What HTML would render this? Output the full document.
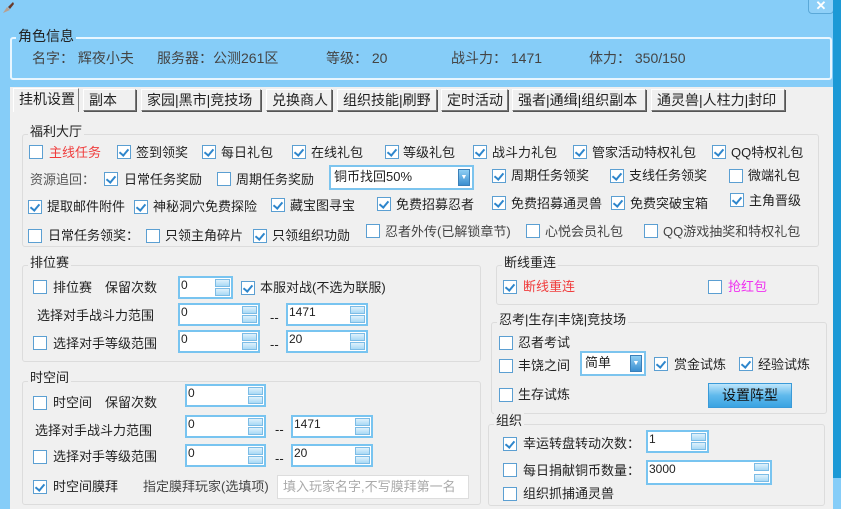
<!DOCTYPE html>
<html><head><meta charset="utf-8"><style>
*{margin:0;padding:0;box-sizing:border-box}
body{width:841px;height:509px;overflow:hidden;background:#86cdf8;position:relative;font-family:"Liberation Sans","Noto Sans CJK SC",sans-serif;font-size:13px;color:#222}
.a{position:absolute;white-space:nowrap}
.t{position:absolute;white-space:nowrap;line-height:16px}
.cb{position:absolute;width:14px;height:14px;border:1px solid #5b9fd2;background:#fff}
.cb.c::after{content:"";position:absolute;left:3px;top:1px;width:4px;height:7px;border:solid #2e86cc;border-width:0 2px 2px 0;transform:rotate(40deg)}
.g{position:absolute;border:1px solid #dcdcdc;border-radius:3px}
.gt{position:absolute;background:#f0f0f0;padding:0 2px;line-height:16px;font-size:13px;color:#222}
.sp{position:absolute;background:#fff;border:2px solid #78c4f0;font-size:12px;line-height:14px;padding-left:1px}
.sp i{position:absolute;right:1px;width:15px;height:8px;background:linear-gradient(#dff1fc,#a9d9f5);border:1px solid #7cbce6}
.sp i.u{top:1px}.sp i.d{bottom:1px}
.tab{position:absolute;top:89px;height:22px;background:#f0f0f0;border:1px solid #777;border-top-color:#fff;border-left-color:#fff;box-shadow:1px 1px 0 #555;font-size:14px;line-height:20px;padding-left:5px}
.inf{position:absolute;white-space:nowrap;line-height:16px;color:#444;font-size:14px;top:50px}
</style></head><body>
<svg class="a" style="left:1px;top:1px" width="14" height="14"><path d="M2 12 L6 6 L9 9 Z" fill="#b8a090"/><path d="M7 6 L12 1 L13 3 L9 8Z" fill="#6a3a2a"/></svg>
<div class="a" style="left:808px;top:-2px;width:26px;height:16px;border:1px solid #5aa8d8;border-radius:0 0 4px 4px;background:#8fd0f8;color:#fff;font-weight:bold;font-size:13px;text-align:center;line-height:14px">✕</div>
<div class="a" style="left:833px;top:0;width:8px;height:478px;background:#1c99d6"></div>
<div class="a" style="left:10px;top:37px;width:822px;height:43px;border:2px solid #e8f6ff;border-radius:3px"></div>
<div class="a" style="left:16px;top:28px;background:#86cdf8;padding:0 2px;font-size:14px;line-height:16px">角色信息</div>
<div class="inf" style="left:32px">名字： 辉夜小夫</div>
<div class="inf" style="left:157px">服务器：公测261区</div>
<div class="inf" style="left:326px">等级： 20</div>
<div class="inf" style="left:451px">战斗力： 1471</div>
<div class="inf" style="left:589px">体力： 350/150</div>

<div class="a" style="left:10px;top:87px;width:823px;height:422px;background:#f0f0f0"></div>
<div class="tab" style="left:13px;width:66px;top:88px;height:24px;box-shadow:none;border-bottom:none">挂机设置</div>
<div class="tab" style="left:83px;width:53px">副本</div>
<div class="tab" style="left:141px;width:120px">家园|黑市|竞技场</div>
<div class="tab" style="left:266px;width:66px">兑换商人</div>
<div class="tab" style="left:337px;width:100px">组织技能|刷野</div>
<div class="tab" style="left:441px;width:67px">定时活动</div>
<div class="tab" style="left:512px;width:134px">强者|通缉|组织副本</div>
<div class="tab" style="left:651px;width:134px">通灵兽|人柱力|封印</div>

<!-- 福利大厅 -->
<div class="g" style="left:22px;top:134px;width:797px;height:113px"></div>
<div class="gt" style="left:28px;top:124px">福利大厅</div>
<div class="cb" style="left:29px;top:145px"></div><div class="t" style="left:49px;top:145px;color:#f03c3c">主线任务</div>
<div class="cb c" style="left:117px;top:145px"></div><div class="t" style="left:136px;top:145px">签到领奖</div>
<div class="cb c" style="left:202px;top:145px"></div><div class="t" style="left:221px;top:145px">每日礼包</div>
<div class="cb c" style="left:292px;top:145px"></div><div class="t" style="left:311px;top:145px">在线礼包</div>
<div class="cb c" style="left:385px;top:145px"></div><div class="t" style="left:403px;top:145px">等级礼包</div>
<div class="cb c" style="left:473px;top:145px"></div><div class="t" style="left:492px;top:145px">战斗力礼包</div>
<div class="cb c" style="left:573px;top:145px"></div><div class="t" style="left:592px;top:145px">管家活动特权礼包</div>
<div class="cb c" style="left:712px;top:145px"></div><div class="t" style="left:731px;top:145px">QQ特权礼包</div>

<div class="t" style="left:30px;top:172px;color:#555">资源追回：</div>
<div class="cb c" style="left:104px;top:172px"></div><div class="t" style="left:124px;top:172px">日常任务奖励</div>
<div class="cb" style="left:217px;top:172px"></div><div class="t" style="left:236px;top:172px">周期任务奖励</div>
<div class="a" style="left:329px;top:165px;width:145px;height:25px;background:#fff;border:2px solid #7cc4ee;line-height:20px;padding-left:3px">铜币找回50%<span style="position:absolute;right:2px;top:2px;width:12px;height:17px;background:linear-gradient(#8fcff4,#3b8fd0);border:1px solid #3a7fb8;color:#fff;font-size:7px;line-height:16px;text-align:center">▼</span></div>
<div class="cb c" style="left:492px;top:169px"></div><div class="t" style="left:511px;top:168px">周期任务领奖</div>
<div class="cb c" style="left:610px;top:169px"></div><div class="t" style="left:629px;top:168px">支线任务领奖</div>
<div class="cb" style="left:729px;top:169px"></div><div class="t" style="left:748px;top:168px">微端礼包</div>

<div class="cb c" style="left:28px;top:200px"></div><div class="t" style="left:47px;top:199px">提取邮件附件</div>
<div class="cb c" style="left:134px;top:200px"></div><div class="t" style="left:153px;top:199px">神秘洞穴免费探险</div>
<div class="cb c" style="left:271px;top:198px"></div><div class="t" style="left:290px;top:198px">藏宝图寻宝</div>
<div class="cb c" style="left:377px;top:197px"></div><div class="t" style="left:396px;top:197px">免费招募忍者</div>
<div class="cb c" style="left:492px;top:196px"></div><div class="t" style="left:511px;top:196px">免费招募通灵兽</div>
<div class="cb c" style="left:611px;top:196px"></div><div class="t" style="left:630px;top:196px">免费突破宝箱</div>
<div class="cb c" style="left:730px;top:193px"></div><div class="t" style="left:749px;top:193px">主角晋级</div>

<div class="cb" style="left:28px;top:229px"></div><div class="t" style="left:48px;top:228px">日常任务领奖：</div>
<div class="cb" style="left:146px;top:229px"></div><div class="t" style="left:165px;top:228px">只领主角碎片</div>
<div class="cb c" style="left:253px;top:229px"></div><div class="t" style="left:272px;top:228px">只领组织功勋</div>
<div class="cb" style="left:366px;top:224px"></div><div class="t" style="left:385px;top:224px;color:#444">忍者外传(已解锁章节)</div>
<div class="cb" style="left:526px;top:224px"></div><div class="t" style="left:545px;top:224px;color:#444">心悦会员礼包</div>
<div class="cb" style="left:644px;top:224px"></div><div class="t" style="left:663px;top:224px;color:#444">QQ游戏抽奖和特权礼包</div>

<!-- 排位赛 -->
<div class="g" style="left:22px;top:265px;width:459px;height:97px"></div>
<div class="gt" style="left:28px;top:255px">排位赛</div>
<div class="cb" style="left:33px;top:280px"></div><div class="t" style="left:53px;top:280px">排位赛　保留次数</div>
<div class="sp" style="left:178px;top:276px;width:55px;height:23px">0<i class="u"></i><i class="d"></i></div>
<div class="cb c" style="left:241px;top:281px"></div><div class="t" style="left:260px;top:280px">本服对战(不选为联服)</div>
<div class="t" style="left:37px;top:308px">选择对手战斗力范围</div>
<div class="sp" style="left:178px;top:303px;width:82px;height:23px">0<i class="u"></i><i class="d"></i></div>
<div class="t" style="left:270px;top:310px">--</div>
<div class="sp" style="left:286px;top:303px;width:82px;height:23px">1471<i class="u"></i><i class="d"></i></div>
<div class="cb" style="left:33px;top:336px"></div><div class="t" style="left:53px;top:336px">选择对手等级范围</div>
<div class="sp" style="left:178px;top:330px;width:82px;height:23px">0<i class="u"></i><i class="d"></i></div>
<div class="t" style="left:270px;top:337px">--</div>
<div class="sp" style="left:286px;top:330px;width:82px;height:23px">20<i class="u"></i><i class="d"></i></div>

<!-- 时空间 -->
<div class="g" style="left:22px;top:381px;width:459px;height:124px"></div>
<div class="gt" style="left:28px;top:370px">时空间</div>
<div class="cb" style="left:33px;top:396px"></div><div class="t" style="left:53px;top:395px">时空间　保留次数</div>
<div class="sp" style="left:185px;top:384px;width:81px;height:23px">0<i class="u"></i><i class="d"></i></div>
<div class="t" style="left:35px;top:423px">选择对手战斗力范围</div>
<div class="sp" style="left:185px;top:415px;width:81px;height:23px">0<i class="u"></i><i class="d"></i></div>
<div class="t" style="left:275px;top:422px">--</div>
<div class="sp" style="left:291px;top:415px;width:82px;height:23px">1471<i class="u"></i><i class="d"></i></div>
<div class="cb" style="left:33px;top:450px"></div><div class="t" style="left:53px;top:449px">选择对手等级范围</div>
<div class="sp" style="left:185px;top:444px;width:81px;height:23px">0<i class="u"></i><i class="d"></i></div>
<div class="t" style="left:275px;top:451px">--</div>
<div class="sp" style="left:291px;top:444px;width:82px;height:23px">20<i class="u"></i><i class="d"></i></div>
<div class="cb c" style="left:33px;top:480px"></div><div class="t" style="left:53px;top:479px">时空间膜拜</div>
<div class="t" style="left:143px;top:479px;color:#444">指定膜拜玩家(选填项)</div>
<div class="a" style="left:277px;top:475px;width:192px;height:24px;background:#fff;border:1px solid #ddd;color:#aaa;line-height:22px;padding-left:5px">填入玩家名字,不写膜拜第一名</div>

<!-- 断线重连 -->
<div class="g" style="left:496px;top:265px;width:323px;height:40px"></div>
<div class="gt" style="left:502px;top:255px">断线重连</div>
<div class="cb c" style="left:503px;top:280px"></div><div class="t" style="left:523px;top:279px;color:#f03c3c">断线重连</div>
<div class="cb" style="left:708px;top:280px"></div><div class="t" style="left:728px;top:279px;color:#f030f0">抢红包</div>

<!-- 忍考 -->
<div class="g" style="left:491px;top:322px;width:336px;height:92px"></div>
<div class="gt" style="left:497px;top:312px">忍考|生存|丰饶|竞技场</div>
<div class="cb" style="left:499px;top:336px"></div><div class="t" style="left:518px;top:335px">忍者考试</div>
<div class="cb" style="left:499px;top:359px"></div><div class="t" style="left:518px;top:358px">丰饶之间</div>
<div class="a" style="left:580px;top:351px;width:66px;height:25px;background:#fff;border:2px solid #7cc4ee;line-height:20px;padding-left:3px">简单<span style="position:absolute;right:2px;top:2px;width:12px;height:17px;background:linear-gradient(#8fcff4,#3b8fd0);border:1px solid #3a7fb8;color:#fff;font-size:7px;line-height:16px;text-align:center">▼</span></div>
<div class="cb c" style="left:654px;top:357px"></div><div class="t" style="left:674px;top:357px">赏金试炼</div>
<div class="cb c" style="left:739px;top:357px"></div><div class="t" style="left:758px;top:357px">经验试炼</div>
<div class="cb" style="left:499px;top:388px"></div><div class="t" style="left:518px;top:387px">生存试炼</div>
<div class="a" style="left:708px;top:383px;width:84px;height:25px;border:1px solid #3a9ad8;background:linear-gradient(#bfe6fb,#5fb9ec 50%,#3aa3e2);text-align:center;line-height:23px;font-size:14px;color:#111">设置阵型</div>

<!-- 组织 -->
<div class="g" style="left:488px;top:424px;width:337px;height:82px"></div>
<div class="gt" style="left:494px;top:413px">组织</div>
<div class="cb c" style="left:503px;top:437px"></div><div class="t" style="left:523px;top:436px">幸运转盘转动次数：</div>
<div class="sp" style="left:646px;top:430px;width:63px;height:23px">1<i class="u"></i><i class="d"></i></div>
<div class="cb" style="left:503px;top:463px"></div><div class="t" style="left:523px;top:463px">每日捐献铜币数量：</div>
<div class="sp" style="left:646px;top:460px;width:126px;height:25px">3000<i class="u"></i><i class="d"></i></div>
<div class="cb" style="left:503px;top:487px"></div><div class="t" style="left:523px;top:486px">组织抓捕通灵兽</div>
</body></html>
